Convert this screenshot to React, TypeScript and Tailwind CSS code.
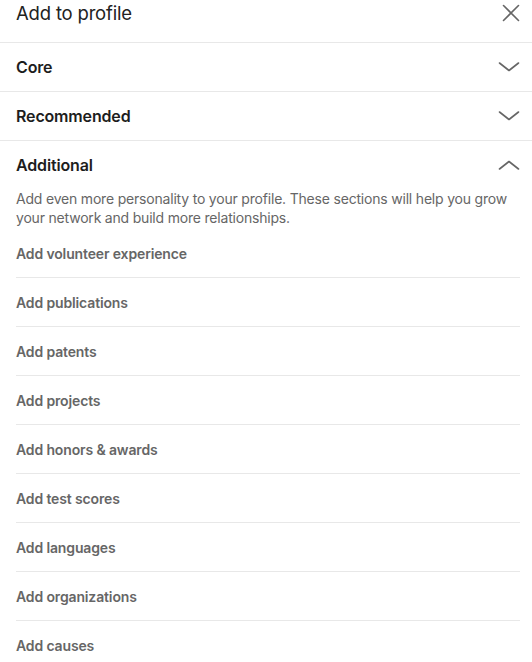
import { ReactNode } from 'react'

// ─── Icons ────────────────────────────────────────────────────────────────────
function ChevronIcon({ up }: { up?: boolean }) {
  return (
    <svg width="22" height="10" viewBox="0 0 22 10" fill="none" className="text-[#666]">
      <path
        d={up ? 'M1.5 9 L11 1.5 L20.5 9' : 'M1.5 1 L11 8.5 L20.5 1'}
        stroke="currentColor"
        strokeWidth="1.6"
        strokeLinecap="round"
        strokeLinejoin="round"
      />
    </svg>
  )
}

function CloseIcon() {
  return (
    <svg width="18" height="18" viewBox="0 0 18 18" fill="none" className="text-[#666]">
      <path d="M1.5 1.5 L16.5 16.5 M16.5 1.5 L1.5 16.5" stroke="currentColor" strokeWidth="1.6" strokeLinecap="round" />
    </svg>
  )
}

// ─── Section row ──────────────────────────────────────────────────────────────
function SectionRow({ title, open, children }: { title: string; open?: boolean; children?: ReactNode }) {
  return (
    <div className="border-b border-[#e8e8e8]">
      <div className="h-12 flex items-center justify-between pl-4 pr-[12px]">
        <span className="text-[16px] font-semibold text-[#1d1d1d] tracking-[-0.01em]">{title}</span>
        <ChevronIcon up={open} />
      </div>
      {children}
    </div>
  )
}

const items = [
  'Add volunteer experience',
  'Add publications',
  'Add patents',
  'Add projects',
  'Add honors & awards',
  'Add test scores',
  'Add languages',
  'Add organizations',
  'Add causes',
]

// ─── Page ─────────────────────────────────────────────────────────────────────
export default function App() {
  return (
    <div
      className="w-[532px] h-[662px] overflow-hidden bg-white"
      style={{ fontFamily: 'Inter, "Noto Sans", sans-serif' }}
    >
      {/* Header */}
      <div className="h-[43px] flex items-start justify-between pl-4 pr-[12px] border-b border-[#e8e8e8]">
        <h1 className="text-[18.5px] leading-[26px] text-[#222] font-normal tracking-[-0.01em]">Add to profile</h1>
        <div className="pt-[4px]">
          <CloseIcon />
        </div>
      </div>

      <SectionRow title="Core" />
      <SectionRow title="Recommended" />

      {/* Additional (expanded) */}
      <div>
        <div className="h-12 flex items-center justify-between pl-4 pr-[12px]">
          <span className="text-[16px] font-semibold text-[#1d1d1d] tracking-[-0.01em]">Additional</span>
          <ChevronIcon up />
        </div>
        <p className="pl-4 pr-[12px] text-[14px] leading-[19px] text-[#666] mb-[2px] tracking-[-0.014em]">
          Add even more personality to your profile. These sections will help you grow your network and build more
          relationships.
        </p>
        <ul className="pl-4 pr-[12px]">
          {items.map((item) => (
            <li key={item} className="h-12 flex items-center border-b border-[#e8e8e8] box-content">
              <span className="text-[14px] font-semibold text-[#666] tracking-[-0.01em]">{item}</span>
            </li>
          ))}
        </ul>
      </div>
    </div>
  )
}
